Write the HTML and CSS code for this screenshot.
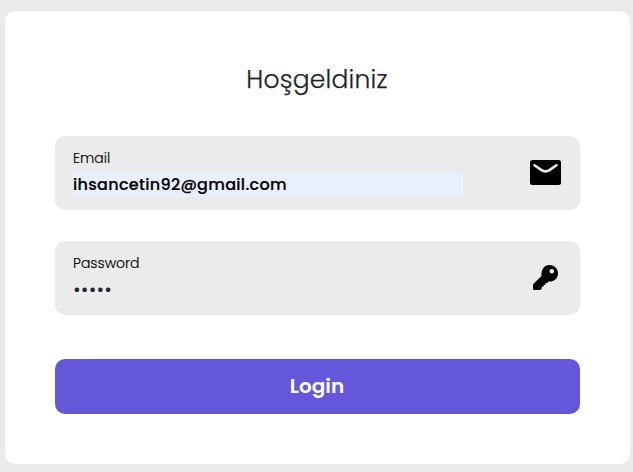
FILE: index.html
```html
<!DOCTYPE html>
<html lang="tr">
<head>
<meta charset="utf-8">
<title>Login</title>
<link rel="stylesheet" href="styles.css">
</head>
<body>
<form class="card">
  <h1 class="title">Hoşgeldiniz</h1>
  <div class="field">
    <div class="field-body">
      <label class="label" for="email">Email</label>
      <input class="input input-filled" id="email" type="text" value="ihsancetin92@gmail.com" spellcheck="false">
    </div>
    <svg class="icon icon-mail" viewBox="0 0 31 25">
      <rect width="31" height="25" rx="2.5"/>
      <path class="flap" d="M4.5 5.3 11.5 10.1Q15.5 12.6 19.5 10.1L26.5 5.3"/>
    </svg>
  </div>
  <div class="field">
    <div class="field-body">
      <label class="label" for="password">Password</label>
      <div class="input input-password" id="password">•••••</div>
    </div>
    <svg class="icon icon-key" viewBox="0 0 25 25">
      <path fill-rule="evenodd" d="M16.6 0C21.3 0 25 3.7 25 8.4S21.3 16.5 16.6 16.5H15.4L14.3 18.1H12.5V19.8H10.7V21.5H8.9V23.2L7.2 25H1.5Q0 25 0 23.5V20.4Q0 19.4.8 18.6L8.5 10.9C8 4.7 11.2 0 16.6 0ZM18.8 4.0A2.3 2.3 0 1 0 18.8 8.6 2.3 2.3 0 1 0 18.8 4.0Z"/>
    </svg>
  </div>
  <button class="button" type="button">Login</button>
</form>
</body>
</html>
```
FILE: styles.css
```css
* { box-sizing: border-box; }
body {
  margin: 0;
  height: 472px;
  padding: 11px 3px 8px 5px;
  background: #ebebeb;
  font-family: Poppins, Inter, "Open Sans", sans-serif;
  overflow: hidden;
}
.card {
  height: 453px;
  padding: 49px 50px 50px;
  border-radius: 10px;
  background: #fff;
}
.title {
  height: 40px;
  margin: 0 0 36px;
  padding-right: 1px;
  color: #212529;
  font-size: 25px;
  font-weight: 300;
  line-height: 40px;
  text-align: center;
  letter-spacing: 0.2px;
  -webkit-text-stroke: 0.25px #212529;
}
.field {
  display: flex;
  height: 74px;
  margin-bottom: 31px;
  padding: 13px 18px;
  justify-content: space-between;
  border-radius: 10px;
  background: #ebebeb;
}
.field-body { width: 390px; }
.label {
  display: block;
  height: 20px;
  margin-bottom: 3px;
  color: #000;
  font-size: 14px;
  font-weight: 300;
  line-height: 19px;
  -webkit-text-stroke: 0.15px #000;
}
.input {
  display: block;
  width: 390px;
  height: 25px;
  padding: 0;
  border: 0;
  outline: 0;
  border-radius: 1px;
  background: transparent;
  color: #000;
  font-family: inherit;
  font-size: 16px;
  font-weight: 500;
  line-height: 25px;
}
.input-filled {
  background: #e8f0fe;
  letter-spacing: 0.3px;
  -webkit-text-stroke: 0.2px #000;
}
.input-password { color: #212529; font-weight: 600; letter-spacing: 0.15px; }
.icon { display: block; flex: none; fill: #000; }
.icon-mail { width: 31px; height: 25px; margin: 11px 1px 0 0; }
.icon-key { width: 25px; height: 25px; margin: 11px 4px 0 0; }
.flap { fill: none; stroke: #ebebeb; stroke-width: 2.6; stroke-linecap: round; }
.button {
  display: block;
  width: 100%;
  height: 55px;
  margin-top: 44px;
  padding: 0 1px 0 0;
  border: 0;
  border-radius: 10px;
  background: #6457da;
  color: #fff;
  font-family: inherit;
  font-size: 20px;
  font-weight: 600;
  line-height: 55px;
}
```
